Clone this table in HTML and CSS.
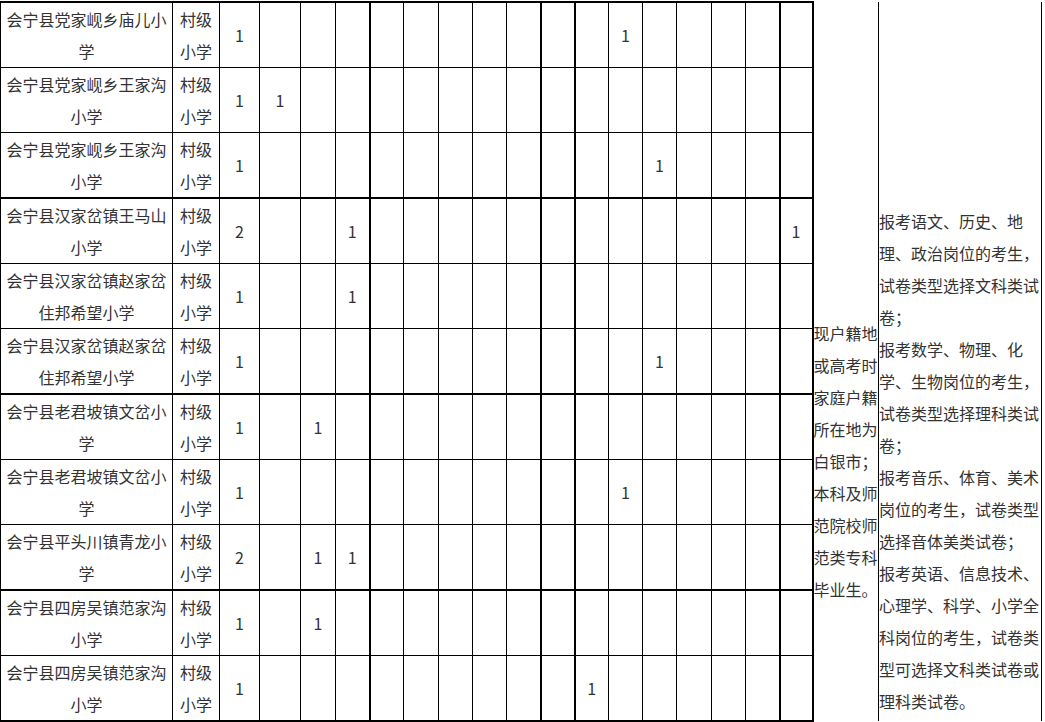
FILE: index.html
```html
<!DOCTYPE html>
<html lang="zh-CN">
<head>
<meta charset="utf-8">
<title>岗位表</title>
<link rel="stylesheet" href="styles.css">
</head>
<body>
<table class="grid">
<colgroup>
<col class="w-name"><col class="w-level"><col class="w-40"><col class="w-41"><col class="w-35"><col class="w-34">
<col class="w-34 thick"><col class="w-35"><col class="w-34"><col class="w-34"><col class="w-34">
<col class="w-34 thick"><col class="w-34 thick"><col class="w-34"><col class="w-34"><col class="w-35"><col class="w-34"><col class="w-34">
<col class="w-33 thick"><col class="w-66 thick"><col class="w-163">
</colgroup>
<tbody>
<tr class="row first">
<td class="name">会宁县党家岘乡庙儿小学</td><td class="level">村级小学</td>
<td>1</td><td></td><td></td><td></td><td></td><td></td><td></td><td></td><td></td><td></td><td></td><td>1</td><td></td><td></td><td></td><td></td><td></td>
<td class="side blank" rowspan="3"></td><td class="side blank" rowspan="3"></td>
</tr>
<tr class="row">
<td class="name">会宁县党家岘乡王家沟小学</td><td class="level">村级小学</td>
<td>1</td><td>1</td><td></td><td></td><td></td><td></td><td></td><td></td><td></td><td></td><td></td><td></td><td></td><td></td><td></td><td></td><td></td>
</tr>
<tr class="row">
<td class="name">会宁县党家岘乡王家沟小学</td><td class="level">村级小学</td>
<td>1</td><td></td><td></td><td></td><td></td><td></td><td></td><td></td><td></td><td></td><td></td><td></td><td>1</td><td></td><td></td><td></td><td></td>
</tr>
<tr class="row sep">
<td class="name">会宁县汉家岔镇王马山小学</td><td class="level">村级小学</td>
<td>2</td><td></td><td></td><td>1</td><td></td><td></td><td></td><td></td><td></td><td></td><td></td><td></td><td></td><td></td><td></td><td></td><td>1</td>
<td class="side origin" rowspan="8">现户籍地或高考时家庭户籍所在地为白银市；本科及师范院校师范类专科毕业生。</td>
<td class="side note" rowspan="8">报考语文、历史、地理、政治岗位的考生，试卷类型选择文科类试卷；<br>报考数学、物理、化学、生物岗位的考生，试卷类型选择理科类试卷；<br>报考音乐、体育、美术岗位的考生，试卷类型选择音体美类试卷；<br>报考英语、信息技术、心理学、科学、小学全科岗位的考生，试卷类型可选择文科类试卷或理科类试卷。</td>
</tr>
<tr class="row">
<td class="name">会宁县汉家岔镇赵家岔住邦希望小学</td><td class="level">村级小学</td>
<td>1</td><td></td><td></td><td>1</td><td></td><td></td><td></td><td></td><td></td><td></td><td></td><td></td><td></td><td></td><td></td><td></td><td></td>
</tr>
<tr class="row">
<td class="name">会宁县汉家岔镇赵家岔住邦希望小学</td><td class="level">村级小学</td>
<td>1</td><td></td><td></td><td></td><td></td><td></td><td></td><td></td><td></td><td></td><td></td><td></td><td>1</td><td></td><td></td><td></td><td></td>
</tr>
<tr class="row sep">
<td class="name">会宁县老君坡镇文岔小学</td><td class="level">村级小学</td>
<td>1</td><td></td><td>1</td><td></td><td></td><td></td><td></td><td></td><td></td><td></td><td></td><td></td><td></td><td></td><td></td><td></td><td></td>
</tr>
<tr class="row">
<td class="name">会宁县老君坡镇文岔小学</td><td class="level">村级小学</td>
<td>1</td><td></td><td></td><td></td><td></td><td></td><td></td><td></td><td></td><td></td><td></td><td>1</td><td></td><td></td><td></td><td></td><td></td>
</tr>
<tr class="row">
<td class="name">会宁县平头川镇青龙小学</td><td class="level">村级小学</td>
<td>2</td><td></td><td>1</td><td>1</td><td></td><td></td><td></td><td></td><td></td><td></td><td></td><td></td><td></td><td></td><td></td><td></td><td></td>
</tr>
<tr class="row sep">
<td class="name">会宁县四房吴镇范家沟小学</td><td class="level">村级小学</td>
<td>1</td><td></td><td>1</td><td></td><td></td><td></td><td></td><td></td><td></td><td></td><td></td><td></td><td></td><td></td><td></td><td></td><td></td>
</tr>
<tr class="row">
<td class="name">会宁县四房吴镇范家沟小学</td><td class="level">村级小学</td>
<td>1</td><td></td><td></td><td></td><td></td><td></td><td></td><td></td><td></td><td></td><td>1</td><td></td><td></td><td></td><td></td><td></td><td></td>
</tr>
</tbody>
</table>
</body>
</html>
```

FILE: styles.css
```css
html, body {
  margin: 0;
  padding: 0;
  background: #fff;
}
body {
  padding-top: 1px;
  font-family: "Noto Sans CJK SC", "Noto Sans", sans-serif;
  font-size: 16px;
  color: #333;
}
.grid {
  border-collapse: collapse;
  table-layout: fixed;
  width: 1042px;
}
.w-name { width: 172px; }
.w-level { width: 47px; }
.w-40 { width: 40px; }
.w-41 { width: 41px; }
.w-35 { width: 35px; }
.w-34 { width: 34px; }
.w-33 { width: 33px; }
.w-66 { width: 66px; }
.w-163 { width: 163px; }
.thick { border-left: 2px solid #000; }

.grid td {
  border: 1px solid #000;
  padding: 0;
  height: 64px;
  line-height: 32px;
  text-align: center;
  vertical-align: middle;
  overflow: hidden;
}
.grid td.name {
  padding: 0 5px;
}
.row.first td:not(.side),
.row.sep td:not(.side) {
  border-top: 2px solid #000;
}
.row:last-child td {
  border-bottom: 2px solid #000;
}
.grid td.side {
  border-top: none;
  border-bottom: none;
  text-align: left;
  height: auto;
}
.grid td.origin {
  border-left: 2px solid #000;
  padding-top: 3px;
}
.grid td.note {
  padding-top: 3px;
}
```
